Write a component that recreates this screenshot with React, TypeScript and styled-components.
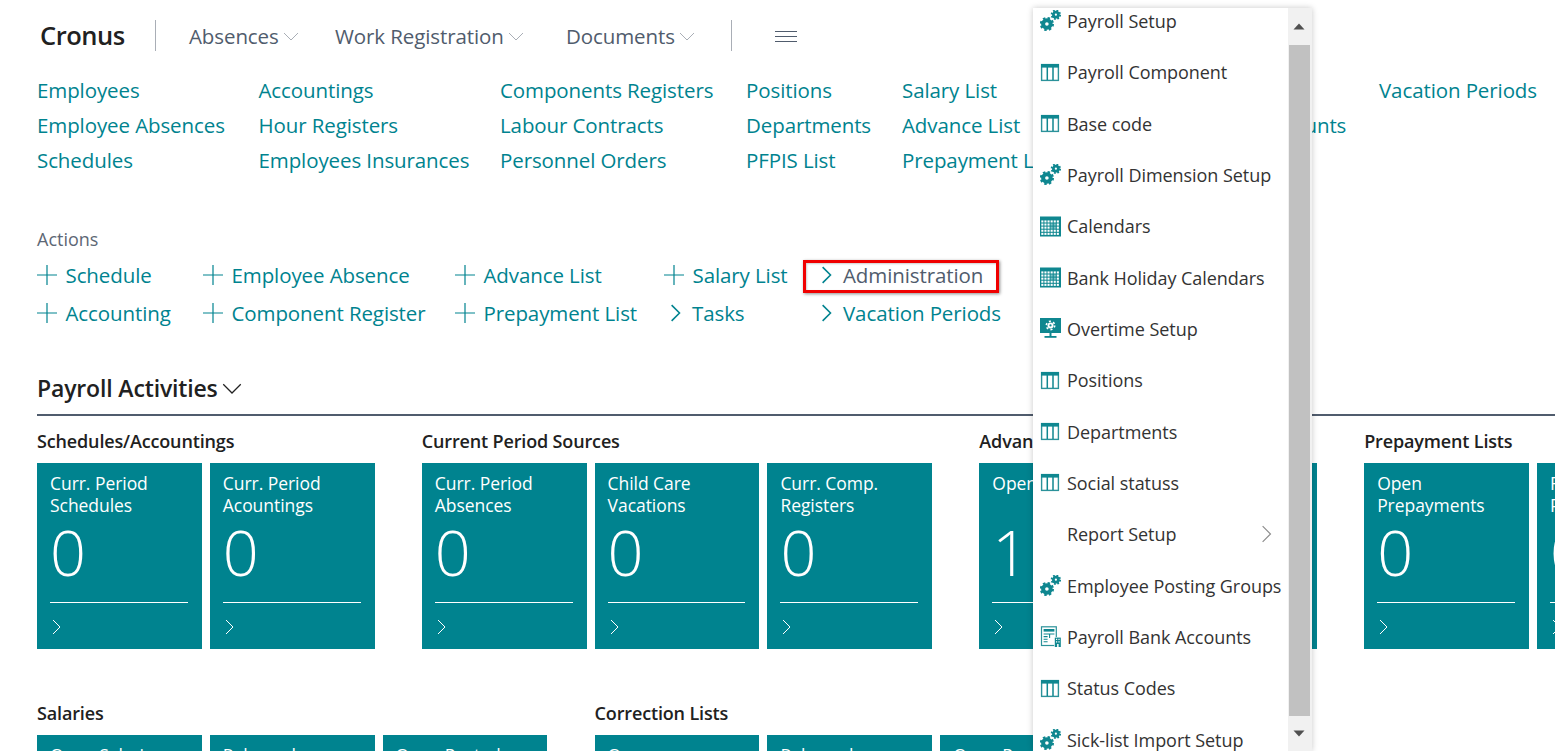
import React from "react";
import styled, { createGlobalStyle } from "styled-components";

const TEAL = "#00838f";
const FONT = `"Open Sans", "Noto Sans", "Liberation Sans", sans-serif`;

const Global = createGlobalStyle`
  html, body { margin: 0; padding: 0; background: #fff; height: 751px; overflow: hidden; }
  #root { height: 751px; overflow: hidden; }
  * { box-sizing: border-box; }
`;

const Page = styled.div`
  position: relative;
  width: 1555px;
  height: 751px;
  overflow: hidden;
  padding-left: 37px;
  font-family: ${FONT};
  background: #fff;
`;

const Header = styled.header`
  display: flex;
  align-items: center;
  height: 31px;
  margin-top: 20px;
  padding-left: 3px;
`;

const Brand = styled.div`
  font-size: 25.5px;
  font-weight: 600;
  letter-spacing: -0.5px;
  color: #212121;
  width: 116px;
  border-right: 1px solid #a9aeb6;
  line-height: 31px;
`;

const NavItem = styled.div<{ $w: number }>`
  display: flex;
  align-items: center;
  width: ${(p) => p.$w}px;
  font-size: 20.5px;
  letter-spacing: -0.1px;
  color: #505c6d;
  white-space: nowrap;
  gap: 4px;
`;

const NavList = styled.nav`
  display: flex;
  padding-left: 33px;
  width: 576px;
  height: 31px;
  align-items: center;
  border-right: 1px solid #a9aeb6;
`;

const Burger = styled.div`
  margin: 2px 0 0 43px;
  width: 22px;
  display: flex;
  flex-direction: column;
  gap: 4px;
  & > i { display: block; height: 1px; background: #505c6d; }
`;

const LinkGrid = styled.div`
  display: grid;
  grid-template-columns: 221.5px 241.5px 246px 156px 207px 270px 200px;
  grid-template-rows: repeat(3, 35px);
  grid-auto-flow: column;
  margin-top: 22px;
`;

const TopLink = styled.a`
  font-size: 20.5px;
  letter-spacing: -0.1px;
  line-height: 35px;
  color: ${TEAL};
  white-space: nowrap;
`;

const ActionsLabel = styled.div`
  margin-top: 49px;
  font-size: 18px;
  line-height: 24px;
  color: #5d6775;
`;

const ActionGrid = styled.div`
  display: grid;
  grid-template-columns: 166px 252px 209px 151px 200px;
  grid-template-rows: repeat(2, 38px);
  grid-auto-flow: column;
  margin-top: 5px;
`;

const ActionItem = styled.a<{ $active?: boolean }>`
  position: relative;
  display: flex;
  align-items: center;
  font-size: 20.5px;
  letter-spacing: -0.1px;
  color: ${(p) => (p.$active ? "#505c6d" : TEAL)};
  white-space: nowrap;
  ${(p) =>
    p.$active
      ? `&::after {
          content: "";
          box-sizing: border-box;
          position: absolute;
          left: -12px;
          top: 4px;
          width: 196px;
          height: 33px;
          border: 3px solid #f00000;
          box-shadow: 1px 1px 3px rgba(0,0,0,.45), inset 1px 1px 2px rgba(0,0,0,.2);
        }`
      : ""}
`;

const PlusSlot = styled.span`
  display: inline-flex;
  width: 28.5px;
  flex: none;
`;

const ChevSlot = styled.span`
  display: inline-flex;
  padding-left: 2px;
  width: 28px;
  flex: none;
`;

const SectionHead = styled.div`
  display: flex;
  align-items: center;
  gap: 4px;
  margin-top: 42px;
  height: 27px;
  font-size: 23px;
  font-weight: 600;
  letter-spacing: -0.15px;
  color: #212121;
`;

const SectionRule = styled.div`
  height: 2px;
  background: #505c6d;
  margin-top: 13px;
`;

const TileRows = styled.div`
  display: flex;
  flex-direction: column;
  gap: 53px;
  margin-top: 14px;
`;

const TileRow = styled.div`
  display: flex;
  gap: 47.2px;
`;

const Group = styled.section`
  flex: none;
`;

const GroupTitle = styled.h3`
  margin: 0 0 11px;
  height: 22px;
  line-height: 22px;
  font-size: 18px;
  font-weight: 600;
  letter-spacing: -0.15px;
  color: #212121;
  white-space: nowrap;
`;

const Tiles = styled.div`
  display: flex;
  gap: 8px;
`;

const Tile = styled.div`
  width: 164.8px;
  height: 186px;
  flex: none;
  padding: 9px 14px 0 13px;
  background: ${TEAL};
  color: #fff;
`;

const TileTitle = styled.div`
  height: 44px;
  font-size: 17.5px;
  line-height: 22px;
  letter-spacing: -0.05px;
  white-space: pre-line;
`;

const TileNumber = styled.div`
  height: 86px;
  font-size: 63px;
  font-weight: 300;
  line-height: 71px;
`;

const TileFoot = styled.div`
  border-top: 1px solid #fff;
  padding-top: 16px;
  display: flex;
  & > svg { margin-left: -2px; }
`;

/* dropdown that lies over the page */
const Menu = styled.div`
  position: absolute;
  left: 1033px;
  top: 8px;
  bottom: 0;
  width: 279px;
  display: flex;
  background: #fff;
  box-shadow: 0 0 6px rgba(0, 0, 0, 0.22);
  overflow: hidden;
`;

const MenuList = styled.ul`
  list-style: none;
  margin: -12.7px 0 0;
  padding: 0;
  flex: 1;
  min-width: 0;
`;

const MenuItem = styled.li`
  display: flex;
  align-items: center;
  height: 51.33px;
  padding-left: 7px;
  font-size: 18px;
  letter-spacing: -0.05px;
  color: #333;
  white-space: nowrap;
`;

const MenuIcon = styled.span`
  display: inline-flex;
  width: 27px;
  flex: none;
`;

const SubArrow = styled.span`
  display: inline-flex;
  margin-left: auto;
  margin-right: 13px;
`;

const ScrollTrack = styled.div`
  width: 24px;
  flex: none;
  display: flex;
  flex-direction: column;
  background: #f1f1f1;
  padding-right: 2px;
`;

const ScrollBtn = styled.div<{ $h: number }>`
  height: ${(p) => p.$h}px;
  display: flex;
  align-items: center;
  justify-content: center;
  flex: none;
`;

const ScrollThumb = styled.div`
  flex: 1;
  margin-left: 1px;
  background: #c1c1c1;
`;

/* ---------- icons ---------- */
const IC = "#0f8790";

const GearsIcon = () => (
  <svg width="21" height="21" viewBox="0 0 21 21">
    <g fill="none" stroke={IC}>
      <circle cx="6.9" cy="14" r="3.8" strokeWidth="4" />
      <circle cx="6.9" cy="14" r="5.9" strokeWidth="2.4" strokeDasharray="2.4 2.23" />
      <circle cx="15.9" cy="4.7" r="2.5" strokeWidth="2.8" />
      <circle cx="15.9" cy="4.7" r="4.2" strokeWidth="2" strokeDasharray="1.7 1.6" />
    </g>
  </svg>
);

const TableIcon = () => (
  <svg width="21" height="21" viewBox="0 0 21 21">
    <rect x="1.6" y="2.6" width="16.8" height="15.8" fill="none" stroke="#2b929a" strokeWidth="1.4" />
    <rect x="1" y="2" width="18" height="3.6" fill={IC} />
    <path d="M7.3 5v13M13 5v13" stroke={IC} strokeWidth="1.5" />
  </svg>
);

const CalendarIcon = () => {
  const cells: React.ReactNode[] = [];
  for (let r = 0; r < 5; r++) {
    for (let c = 0; c < 6; c++) {
      const accent = (c === 3 || c === 4) && (r === 1 || r === 2);
      cells.push(
        <rect
          key={`${r}-${c}`}
          x={1.3 + c * 3.1}
          y={4.4 + r * 3.1}
          width="2.1"
          height="2.1"
          fill={accent ? "#7cc1c6" : "#fff"}
        />
      );
    }
  }
  return (
    <svg width="21" height="21" viewBox="0 0 21 21">
      <rect x="0" y="0.5" width="21" height="20" fill={IC} />
      {cells}
    </svg>
  );
};

const MonitorIcon = () => (
  <svg width="21" height="21" viewBox="0 0 21 21">
    <rect x="0" y="0" width="21" height="15" fill={IC} />
    <circle cx="10.5" cy="7.4" r="3" fill="#fff" />
    <circle cx="10.5" cy="7.4" r="4.2" fill="none" stroke="#fff" strokeWidth="1.6" strokeDasharray="2.1 2.3" />
    <circle cx="10.5" cy="7.4" r="1.1" fill={IC} />
    <path d="M9.5 15h2v3h-2z" fill={IC} />
    <rect x="4.5" y="18" width="12" height="1.8" fill={IC} />
  </svg>
);

const BankIcon = () => (
  <svg width="21" height="21" viewBox="0 0 21 21">
    <rect x="1.5" y="0.8" width="14.8" height="18.7" fill="none" stroke="#2b929a" strokeWidth="1.2" />
    <rect x="3.6" y="3" width="10.8" height="2.6" fill={IC} />
    <path d="M3.6 8h10.8M3.6 10.6h4M3.6 13.2h4M3.6 15.8h4M9.6 8v4" stroke={IC} strokeWidth="1.1" fill="none" />
    <rect x="14.2" y="11" width="6.8" height="10" fill="#fff" />
    <rect x="14.8" y="11.6" width="6" height="9.4" fill={IC} />
    <path d="M16 13.4h1.2M18.4 13.4h1.2M16 15.8h1.2M18.4 15.8h1.2" stroke="#fff" strokeWidth="1.3" />
    <rect x="17.1" y="18" width="1.5" height="3" fill="#fff" />
  </svg>
);

const Chevron = ({ dir, size, color, sw = 1 }: { dir: "down" | "right"; size: number; color: string; sw?: number }) => (
  <svg width={size} height={size} viewBox="0 0 16 16" fill="none" stroke={color} strokeWidth={sw}>
    {dir === "down" ? <path d="M1 5l7 7 7-7" /> : <path d="M5 1l7 7-7 7" />}
  </svg>
);

const Plus = () => (
  <svg width="20" height="20" viewBox="0 0 20 20" stroke={TEAL} strokeWidth="1.2">
    <path d="M0 10h20M10 0v20" />
  </svg>
);

const Triangle = ({ up }: { up?: boolean }) => (
  <svg width="12" height="7" viewBox="0 0 12 7" fill="#505050">
    <path d={up ? "M6 0.5L11.5 6.5H0.5z" : "M0.5 0.5h11L6 6.5z"} />
  </svg>
);

/* ---------- data ---------- */
const links = [
  "Employees", "Employee Absences", "Schedules",
  "Accountings", "Hour Registers", "Employees Insurances",
  "Components Registers", "Labour Contracts", "Personnel Orders",
  "Positions", "Departments", "PFPIS List",
  "Salary List", "Advance List", "Prepayment List",
  "Tasks", "Employee Bank Accounts", "",
  "Vacation Periods",
];

type Act = { label: string; kind: "plus" | "chev"; active?: boolean };
const actions: Act[] = [
  { label: "Schedule", kind: "plus" },
  { label: "Accounting", kind: "plus" },
  { label: "Employee Absence", kind: "plus" },
  { label: "Component Register", kind: "plus" },
  { label: "Advance List", kind: "plus" },
  { label: "Prepayment List", kind: "plus" },
  { label: "Salary List", kind: "plus" },
  { label: "Tasks", kind: "chev" },
  { label: "Administration", kind: "chev", active: true },
  { label: "Vacation Periods", kind: "chev" },
];

type G = { title: string; tiles: [string, string][] };
const row1: G[] = [
  { title: "Schedules/Accountings", tiles: [["Curr. Period\nSchedules", "0"], ["Curr. Period\nAcountings", "0"]] },
  { title: "Current Period Sources", tiles: [["Curr. Period\nAbsences", "0"], ["Child Care\nVacations", "0"], ["Curr. Comp.\nRegisters", "0"]] },
  { title: "Advance Lists", tiles: [["Open Advances", "1"], ["Released\nAdvances", "0"]] },
  { title: "Prepayment Lists", tiles: [["Open\nPrepayments", "0"], ["Released\nPrepayments", "0"]] },
];
const row2: G[] = [
  { title: "Salaries", tiles: [["Open Salaries", ""], ["Released", ""], ["Open Posted", ""]] },
  { title: "Correction Lists", tiles: [["Open", ""], ["Released", ""], ["Open Posted", ""]] },
];

type M = { label: string; icon?: React.ReactNode; sub?: boolean };
const menu: M[] = [
  { label: "Payroll Setup", icon: <GearsIcon /> },
  { label: "Payroll Component", icon: <TableIcon /> },
  { label: "Base code", icon: <TableIcon /> },
  { label: "Payroll Dimension Setup", icon: <GearsIcon /> },
  { label: "Calendars", icon: <CalendarIcon /> },
  { label: "Bank Holiday Calendars", icon: <CalendarIcon /> },
  { label: "Overtime Setup", icon: <MonitorIcon /> },
  { label: "Positions", icon: <TableIcon /> },
  { label: "Departments", icon: <TableIcon /> },
  { label: "Social statuss", icon: <TableIcon /> },
  { label: "Report Setup", sub: true },
  { label: "Employee Posting Groups", icon: <GearsIcon /> },
  { label: "Payroll Bank Accounts", icon: <BankIcon /> },
  { label: "Status Codes", icon: <TableIcon /> },
  { label: "Sick-list Import Setup", icon: <GearsIcon /> },
];

const TileGroups = ({ groups }: { groups: G[] }) => (
  <TileRow>
    {groups.map((g) => (
      <Group key={g.title}>
        <GroupTitle>{g.title}</GroupTitle>
        <Tiles>
          {g.tiles.map(([t, n], i) => (
            <Tile key={i}>
              <TileTitle>{t}</TileTitle>
              <TileNumber>{n}</TileNumber>
              <TileFoot>
                <Chevron dir="right" size={16} color="#fff" />
              </TileFoot>
            </Tile>
          ))}
        </Tiles>
      </Group>
    ))}
  </TileRow>
);

export default function App() {
  return (
    <Page>
      <Global />
      <Header>
        <Brand>Cronus</Brand>
        <NavList>
          <NavItem $w={146}>
            Absences
            <Chevron dir="down" size={16} color="#a9aeb6" />
          </NavItem>
          <NavItem $w={231}>
            Work Registration
            <Chevron dir="down" size={16} color="#a9aeb6" />
          </NavItem>
          <NavItem $w={165}>
            Documents
            <Chevron dir="down" size={16} color="#a9aeb6" />
          </NavItem>
        </NavList>
        <Burger>
          <i />
          <i />
          <i />
        </Burger>
      </Header>

      <LinkGrid>
        {links.map((l, i) => (
          <TopLink key={i}>{l}</TopLink>
        ))}
      </LinkGrid>

      <ActionsLabel>Actions</ActionsLabel>
      <ActionGrid>
        {actions.map((a) => (
          <ActionItem key={a.label} $active={a.active}>
            {a.kind === "plus" ? (
              <PlusSlot>
                <Plus />
              </PlusSlot>
            ) : (
              <ChevSlot>
                <Chevron dir="right" size={18} color={TEAL} sw={1.4} />
              </ChevSlot>
            )}
            {a.label}
          </ActionItem>
        ))}
      </ActionGrid>

      <SectionHead>
        Payroll Activities
        <Chevron dir="down" size={20} color="#212121" />
      </SectionHead>
      <SectionRule />

      <TileRows>
        <TileGroups groups={row1} />
        <TileGroups groups={row2} />
      </TileRows>

      <Menu>
        <MenuList>
          {menu.map((m) => (
            <MenuItem key={m.label}>
              <MenuIcon>{m.icon}</MenuIcon>
              {m.label}
              {m.sub && (
                <SubArrow>
                  <Chevron dir="right" size={18} color="#8a8a8a" />
                </SubArrow>
              )}
            </MenuItem>
          ))}
        </MenuList>
        <ScrollTrack>
          <ScrollBtn $h={37}>
            <Triangle up />
          </ScrollBtn>
          <ScrollThumb />
          <ScrollBtn $h={35}>
            <Triangle />
          </ScrollBtn>
        </ScrollTrack>
      </Menu>
    </Page>
  );
}
